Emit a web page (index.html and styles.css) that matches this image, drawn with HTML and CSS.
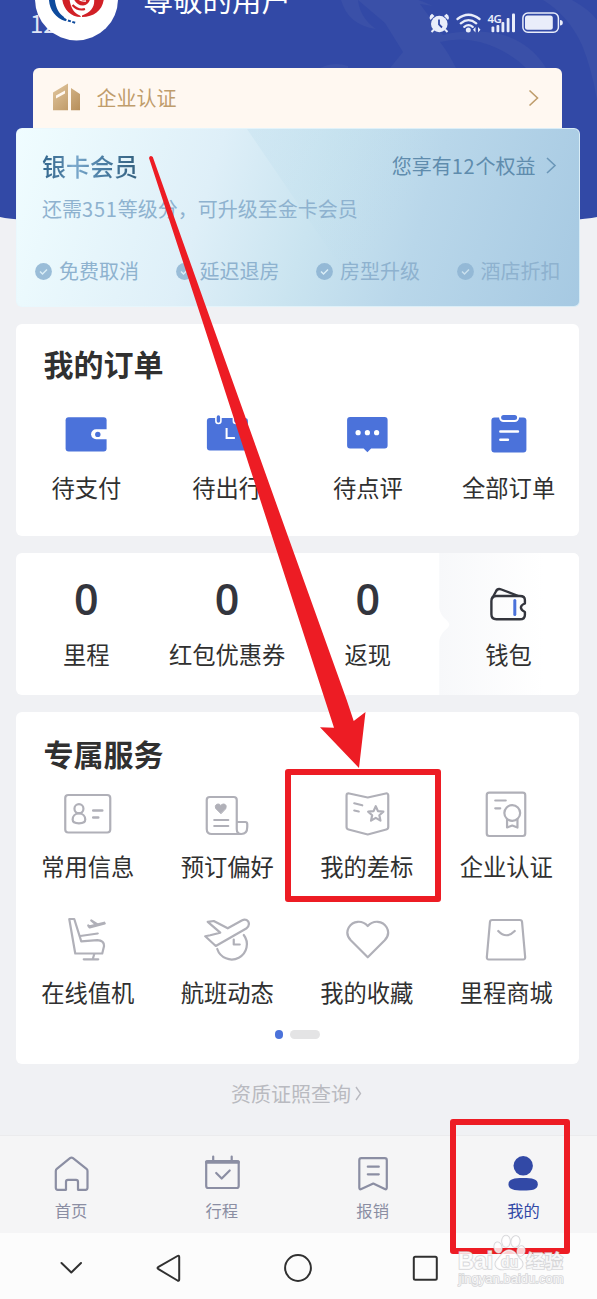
FILE: index.html
```html
<!DOCTYPE html>
<html lang="zh-CN">
<head>
<meta charset="utf-8">
<title>我的</title>
<link rel="stylesheet" href="styles.css">
</head>
<body>
<div class="screen">
  <svg class="hero" viewBox="0 0 597 226" width="597" height="226">
    <path fill="#3249a6" d="M0 0H597V217Q560 225 298 225T0 217Z"/>
    <g fill="#3a50a8">
      <path d="M341 0Q348 25 376 29Q360 18 358 0Z"/>
      <path d="M358 0L385 23L403 52L390 68H456Q448 52 440 42Q460 37 480 42Q508 50 526 68H546Q530 42 500 34Q470 28 443 35L420 4L433 6Q420 0 418 0Z"/>
      <path d="M543 0H572Q590 10 597 20V100Q592 70 582 45Q568 15 543 0Z"/>
      <path d="M320 68Q334 61 348 66V68Z"/>
    </g>
  </svg>

  <header class="top">
    <div class="clock">12</div>
    <svg class="avatar" viewBox="35 -43 84 84" width="84" height="84">
      <circle cx="76.5" cy="-1" r="41.5" fill="#fff"/>
      <path d="M49 -4C48 8 55 18 65 21L64 17C58 13 55 6 54.500 -4Z" fill="#0d4a9d"/>
      <path d="M64 18.500L67.500 21.500M68 20.500L76 23" stroke="#0d4a9d" stroke-width="2" stroke-dasharray="3 1.5"/>
      <path d="M62 -4C62 7 69 17 81 17L80 15.500C73 13 70 6 69 -4Z" fill="#d12026"/>
      <path d="M82 17C95 17 104 9 104 -4H93.500C96 5 92 12 82 15.500Z" fill="#d12026"/>
      <path d="M73 -4C74 2 78 5.500 83 5.500C88 5 90.500 1 90.500 -4Z" fill="#d12026"/>
      <path d="M72.500 5Q78 11 85 9" fill="none" stroke="#d12026" stroke-width="2.200"/>
      <path d="M77 -3Q80 2 86 1" fill="none" stroke="#fff" stroke-width="1.300"/>
    </svg>
    <div class="user-name">尊敬的用户</div>
    <svg class="status" viewBox="426 10 140 26" width="140" height="26">
      <g fill="#e9edfa">
        <circle cx="439.3" cy="24" r="8.3"/>
        <path d="M432 13.8L434.5 16L430.5 20L429.5 18Q429.5 15 432 13.8ZM446.5 13.8L444 16L448 20L449 18Q449 15 446.5 13.8Z"/>
        <path d="M434 29.500L431.500 32M445 29.500L447.500 32" stroke="#e9edfa" stroke-width="2"/>
        <circle cx="468.3" cy="30" r="2.5"/>
        <path d="M473 29.8L475.5 27V32.5ZM480.5 29.8L478 27V32.5Z"/>
        <rect x="491.5" y="26.5" width="2.8" height="5.7" rx="1"/><rect x="496.5" y="25" width="2.8" height="7.2" rx="1"/><rect x="501.5" y="22" width="2.8" height="10.2" rx="1"/><rect x="506.7" y="18" width="2.8" height="14.2" rx="1"/><rect x="512" y="13.5" width="3" height="18.7" rx="1"/>
        <rect x="525" y="15.5" width="27.8" height="14.2" rx="2.5"/>
        <path d="M560 20Q562.8 20 562.8 22.7T560 25.5Z"/>
      </g>
      <path d="M439 19.5V24.5L442 27.5" fill="none" stroke="#3249a6" stroke-width="1.8"/>
      <path d="M457.500 19Q468.500 10.500 479.500 19M460.800 23.300Q468.500 17 476.200 23.300M464.300 26.800Q468.500 23.500 472.700 26.800" fill="none" stroke="#e9edfa" stroke-width="2.300" stroke-linecap="round"/>
      <rect x="522.900" y="13" width="35.500" height="19.300" rx="5" fill="none" stroke="#e9edfa" stroke-width="1.500"/>
      <text class="net" x="487.500" y="22.800">4G</text>
    </svg>
  </header>

  <div class="cert">
    <svg viewBox="50 82 34 34" width="34" height="34">
      <defs><linearGradient id="gold" x1="0" y1="0" x2="1" y2="1"><stop offset="0" stop-color="#e2c79f"/><stop offset="1" stop-color="#b78f5a"/></linearGradient></defs>
      <path fill="url(#gold)" d="M53 93.500L68 84.500V111.300H53ZM71 89L80 95V111.300H71Z"/>
      <path fill="#fff8f1" d="M56 96.500L65 91.500V94.500L56 99.500Z"/>
    </svg>
    <span class="cert-label">企业认证</span>
    <svg viewBox="526 88 14 20" width="14" height="20"><path d="M529.500 90.500L537.500 98L529.500 105.500" fill="none" stroke="#bf9d6c" stroke-width="1.600"/></svg>
  </div>

  <section class="member">
    <div class="member-head">
      <span class="level">银卡会员</span>
      <span class="rights"><span>您享有<span class="num">12</span>个权益</span>
        <svg viewBox="544 156 14 20" width="14" height="20"><path d="M547 158L555 165.500L547 173" fill="none" stroke="#6b97b8" stroke-width="1.600"/></svg>
      </span>
    </div>
    <div class="upgrade">还需<span class="num">351</span>等级分，可升级至金卡会员</div>
    <div class="perks">
      <span class="perk"><svg viewBox="0 0 17 17" width="17" height="17"><circle cx="8.500" cy="8.500" r="8.400" fill="#9abdd8"/><path d="M5 8.500L7.500 11L12 6.500" fill="none" stroke="#d9edf6" stroke-width="1.500"/></svg>免费取消</span>
      <span class="perk"><svg viewBox="0 0 17 17" width="17" height="17"><circle cx="8.500" cy="8.500" r="8.400" fill="#9abdd8"/><path d="M5 8.500L7.500 11L12 6.500" fill="none" stroke="#d9edf6" stroke-width="1.500"/></svg>延迟退房</span>
      <span class="perk"><svg viewBox="0 0 17 17" width="17" height="17"><circle cx="8.500" cy="8.500" r="8.400" fill="#94b9d6"/><path d="M5 8.500L7.500 11L12 6.500" fill="none" stroke="#d9edf6" stroke-width="1.500"/></svg>房型升级</span>
      <span class="perk"><svg viewBox="0 0 17 17" width="17" height="17"><circle cx="8.500" cy="8.500" r="8.400" fill="#94b9d6"/><path d="M5 8.500L7.500 11L12 6.500" fill="none" stroke="#c9e0ee" stroke-width="1.500"/></svg>酒店折扣</span>
    </div>
  </section>

  <section class="card orders">
    <h2>我的订单</h2>
    <div class="grid">
      <div class="item">
        <svg viewBox="62.400 412 48 44" width="48" height="44"><rect x="66" y="417.300" width="41" height="34.300" rx="3" fill="#4b72da"/><path d="M107.500 429.300H96.500A5 5 0 0 0 96.500 439.300H107.500Z" fill="#fff"/><circle cx="98.200" cy="434.400" r="2.700" fill="#4b72da"/></svg>
        <span>待支付</span>
      </div>
      <div class="item">
        <svg viewBox="203.100 412 48 44" width="48" height="44"><rect x="207" y="418" width="41" height="32.500" rx="3" fill="#4b72da"/><g fill="#4b72da" stroke="#fff" stroke-width="1.600"><rect x="216" y="414.500" width="5" height="9" rx="2.500"/><rect x="233.500" y="414.500" width="5" height="9" rx="2.500"/></g><path d="M226.700 428V438H235" fill="none" stroke="#fff" stroke-width="2"/></svg>
        <span>待出行</span>
      </div>
      <div class="item">
        <svg viewBox="343.900 412 48 44" width="48" height="44"><path d="M350 417H384.500Q387.500 417 387.500 420V445.500Q387.500 448.500 384.500 448.500H371L367.300 452.200L363.500 448.500H350Q347 448.500 347 445.500V420Q347 417 350 417Z" fill="#4b72da"/><g fill="#fff"><circle cx="358" cy="432.700" r="2.600"/><circle cx="367.300" cy="432.700" r="2.600"/><circle cx="376.500" cy="432.700" r="2.600"/></g></svg>
        <span>待点评</span>
      </div>
      <div class="item">
        <svg viewBox="484.600 412 48 44" width="48" height="44"><rect x="491" y="417.600" width="35" height="35" rx="3" fill="#4b72da"/><rect x="499.700" y="414" width="18" height="7" rx="3.500" fill="#4b72da" stroke="#fff" stroke-width="2"/><path d="M500 431.500H517.500M500 439.700H507.500" stroke="#fff" stroke-width="2.600" stroke-linecap="round"/></svg>
        <span>全部订单</span>
      </div>
    </div>
  </section>

  <section class="card assets">
    <div class="asset"><b>0</b><span>里程</span></div>
    <div class="asset"><b>0</b><span>红包优惠券</span></div>
    <div class="asset"><b>0</b><span>返现</span></div>
    <div class="asset wallet">
      <svg viewBox="488.600 574 40 50" width="40" height="50"><g fill="none" stroke="#33353d" stroke-width="2.400" stroke-linejoin="round"><path d="M496 596H519.500Q524.500 596 524.500 600V603.500Q520.500 605 520.500 607.500T524.500 612V615Q524.500 619.300 519.500 619.300H496Q491 619.300 491 614.300V601Q491 596 496 596Z"/><path d="M492 598L495.500 591.500Q497 588 501 589.500L518 596"/></g><path d="M514.400 600.500V614.500" stroke="#4b72da" stroke-width="3" stroke-linecap="round"/></svg>
      <span>钱包</span>
    </div>
  </section>

  <section class="card services">
    <h2>专属服务</h2>
    <div class="grid">
      <div class="item">
        <svg class="line" viewBox="63.750 790 48 48" width="48" height="48"><rect x="65" y="795" width="45" height="37.500" rx="3"/><circle cx="78.700" cy="808.700" r="4.500"/><path d="M78.700 813.500C83 813.500 85 816.500 85 819.500C85 822.500 82 823.300 78.700 823.300S72.400 822.500 72.400 819.500C72.400 816.500 74.400 813.500 78.700 813.500Z"/><path d="M93 810.500H102M93 817.500H98" stroke-width="2.600"/></svg>
        <span>常用信息</span>
      </div>
      <div class="item">
        <svg class="line" viewBox="203.250 790 48 48" width="48" height="48"><path d="M241 834H212Q207 834 207 829V800Q207 797 210 797H234Q237 797 237 800V829Q237 834 241.500 834Q247.500 834 247.500 827V824Q247.500 822 245.500 822H237"/><path d="M214.500 820H228.500M214.500 826H228.500"/><path d="M221 813.500L216 808.500Q214.500 804.500 218.300 804Q220.300 804 221 805.500Q222 804 224 804Q227.500 804.500 226 808.500Z" fill="#b0b0b8" stroke-width="1"/></svg>
        <span>预订偏好</span>
      </div>
      <div class="item">
        <svg class="line" viewBox="342.750 790 48 48" width="48" height="48"><path d="M349 793.500L367.500 797.500L385.500 793.500Q388 793 388 795.500V827Q388 829 386 829.500L367.500 834.500L348.300 829.500Q346.300 829 346.300 827V795.500Q346.300 793 349 793.500Z"/><path d="M354 803.300L362 805.300M354 810.500L358.500 811.500"/><path d="M375.500 806.200L377.700 811.100L383.100 811.700L379.100 815.300L380.200 820.600L375.500 817.900L370.800 820.600L371.900 815.300L367.900 811.700L373.300 811.100Z"/></svg>
        <span>我的差标</span>
      </div>
      <div class="item">
        <svg class="line" viewBox="482.250 790 48 48" width="48" height="48"><rect x="487" y="792.700" width="38.500" height="43.300" rx="2.500"/><path d="M495.500 800.500H506M495.500 808.300H500.500"/><circle cx="512.500" cy="813" r="7.900"/><path d="M507.300 819.500V827.500L512.500 825.500L517.700 827.500V819.500"/></svg>
        <span>企业认证</span>
      </div>
      <div class="item">
        <svg class="line" viewBox="63.750 916 48 48" width="48" height="48"><path d="M69 919H74L81 941.300L97 940.200Q104 940.500 103.800 946L102 953.500H75Z"/><path d="M80 936L97.500 933.500M94 954L92.500 959.300M83.500 959.300H98"/><path d="M88 925.500L89.500 927.500L104.500 923.500M95 924L91 920.500L96.500 924M88.500 926.500L104 922.700"/></svg>
        <span>在线值机</span>
      </div>
      <div class="item">
        <svg class="line" viewBox="203.250 916 48 48" width="48" height="48"><path d="M208 921.800L214 921L228 928.300L242 920.500Q246 918.500 248.500 921.500Q250.500 925.500 246.500 928.500L216 946L205.500 936.300L210.500 935.200L220.500 932.700Z"/><path d="M244 935A15.200 15.200 0 1 1 217.500 949"/><path d="M234 939.500V944.500H240"/></svg>
        <span>航班动态</span>
      </div>
      <div class="item">
        <svg class="line" viewBox="342.750 916 48 48" width="48" height="48"><path d="M367.500 957.300L350.500 940.300C347 936.500 346.300 931.500 348.500 927.500C352.500 920.500 362 919.800 367.500 926C373 919.800 382.500 920.500 386.500 927.500C388.700 931.500 388 936.500 384.500 940.300Z"/></svg>
        <span>我的收藏</span>
      </div>
      <div class="item">
        <svg class="line" viewBox="482.250 916 48 48" width="48" height="48"><path d="M492.500 920H520Q522.200 920 522.300 922L525.400 957Q525.500 959.500 523.500 959.500H489Q487 959.500 487.100 957L490.200 922Q490.300 920 492.500 920Z"/><path d="M498.500 931Q506.500 939.500 515 931"/></svg>
        <span>里程商城</span>
      </div>
    </div>
    <div class="dots"><i class="dot"></i><i class="pill"></i></div>
  </section>

  <div class="license">资质证照查询
    <svg viewBox="355 1086 9 17" width="9" height="17"><path d="M357 1087L361.500 1093.500L357 1100" fill="none" stroke="#b9bac0" stroke-width="1.400"/></svg>
  </div>

  <nav class="tabs">
    <div class="tab">
      <svg viewBox="51 1154 40 40" width="40" height="40"><path d="M70 1158.200Q71.500 1157 73 1158.200L86.500 1168.800Q87.500 1169.600 87.500 1171V1187.800Q87.500 1189.800 85.500 1189.800H78V1181.800Q78 1179.800 76 1179.800H68Q66 1179.800 66 1181.800V1189.800H57.800Q55.800 1189.800 55.800 1187.800V1171Q55.800 1169.600 56.800 1168.800Z"/></svg>
      <span>首页</span>
    </div>
    <div class="tab">
      <svg viewBox="201.800 1154 40 40" width="40" height="40"><rect x="206" y="1161" width="32.500" height="27" rx="2"/><path d="M206.500 1162H238" stroke-width="3.500"/><path d="M213 1156.500V1161M231.500 1156.500V1161M216 1173L221.500 1178.500L229.500 1170.500"/></svg>
      <span>行程</span>
    </div>
    <div class="tab">
      <svg viewBox="352.700 1154 40 40" width="40" height="40"><path d="M361 1158.200H384.500Q386.500 1158.200 386.500 1160.200V1187.500Q386.500 1190 384.500 1189L373 1183.500L361 1189Q359 1190 359 1187.500V1160.200Q359 1158.200 361 1158.200Z"/><path d="M367.500 1166.700H378.500M367.500 1174.300H378.500"/></svg>
      <span>报销</span>
    </div>
    <div class="tab active">
      <svg viewBox="503.500 1154 40 40" width="40" height="40"><circle cx="523.700" cy="1165.800" r="9.700"/><path d="M523.700 1178C533 1178 538.300 1179 538.300 1184.300S533 1190.600 523.700 1190.600S509 1189.500 509 1184.300S514.500 1178 523.700 1178Z"/></svg>
      <span>我的</span>
    </div>
  </nav>

  <div class="sysnav">
    <svg viewBox="56 1253 30 30" width="30" height="30"><path d="M61.500 1263L71.300 1272.500L81 1263"/></svg>
    <svg viewBox="154 1253 30 30" width="30" height="30"><path d="M177.500 1256L158.500 1266.800Q156.500 1268 158.500 1269.200L177.500 1280.500Q179.200 1281.300 179.200 1279.500V1257Q179.200 1255 177.500 1256Z"/></svg>
    <svg viewBox="282.500 1253 30 30" width="30" height="30"><circle cx="297.500" cy="1268" r="12.900"/></svg>
    <svg viewBox="410 1253 30 30" width="30" height="30"><rect x="413.800" y="1256.700" width="23" height="23" rx="1.500"/></svg>
  </div>

  <svg class="arrow" viewBox="0 0 597 1299" width="597" height="1299">
    <path fill="#ed1c24" d="M149 158Q150 154.500 152.800 157L210.700 320L285.700 530L346.700 700L353.700 721L365.500 712L359 768L320 727.300L334 727.700L325 700L270 530L202 320Z"/>
  </svg>
  <div class="mark mark-standard"></div>
  <div class="mark mark-mine"></div>

  <svg class="watermark" viewBox="450 1230 125 62" width="125" height="62">
    <g fill="#fff" fill-opacity=".8" stroke="#cfcfd2" stroke-opacity=".85" stroke-width="1.600" paint-order="stroke">
      <ellipse cx="498" cy="1247.500" rx="3.700" ry="5.300" transform="rotate(-12 498 1247.500)"/>
      <ellipse cx="506" cy="1241.300" rx="4" ry="5.700"/>
      <ellipse cx="515.500" cy="1241.500" rx="4.200" ry="5.500" transform="rotate(10 515.500 1241.500)"/>
      <ellipse cx="521" cy="1251" rx="3.700" ry="5" transform="rotate(12 521 1251)"/>
      <path d="M509 1250C516 1250 517 1257 521 1260C525 1265 521 1270 516 1269.500C511 1268.500 507 1268.500 503 1269.500C497 1270 493 1265 497 1260C501 1256 503 1250 509 1250Z"/>
      <text class="wm-bai" x="458" y="1268.500" textLength="35" lengthAdjust="spacingAndGlyphs">Bai</text>
      <text class="wm-du" x="501" y="1266.500">du</text>
      <text class="wm-cn" x="526" y="1267.500">经验</text>
      <text class="wm-url" x="458.500" y="1282.500" textLength="105" lengthAdjust="spacingAndGlyphs">jingyan.baidu.com</text>
    </g>
  </svg>
</div>
</body>
</html>
```
FILE: styles.css
```css
* { box-sizing: border-box; }
body {
  margin: 0;
  background: #f0f1f4;
  font-family: "Noto Sans CJK SC", sans-serif;
  color: #303030;
}
svg { display: block; flex: none; }
.screen {
  position: relative;
  width: 597px;
  height: 1299px;
  overflow: hidden;
  display: flex;
  flex-direction: column;
}
.hero { position: absolute; left: 0; top: 0; z-index: -1; }

/* header */
.top {
  position: relative;
  height: 68px;
  display: flex;
  align-items: flex-start;
}
.clock {
  width: 5px;
  margin: 8px 0 0 30px;
  font: 400 24px/30px "Noto Sans CJK SC", sans-serif;
  color: #dfe4f5;
}
.avatar { position: relative; margin-top: -43px; }
.user-name {
  margin: -22px 0 0 24.5px;
  font-size: 29.5px;
  line-height: 40px;
  font-weight: 400;
  color: #fff;
  flex: 1;
  white-space: nowrap;
}
.status { margin: 10px 31px 0 0; }
.net { font: 600 11.500px "Noto Sans", sans-serif; fill: #e9edfa; letter-spacing: -.6px; }

/* company certification */
.cert {
  margin: 0 35px 0 33px;
  height: 60px;
  padding: 0 22px 0 17px;
  display: flex;
  align-items: center;
  background: #fff8f1;
  border-radius: 6px 6px 0 0;
  color: #bf9d6c;
  font-size: 20px;
  line-height: 30px;
}
.cert-label { flex: 1; margin: -1px 0 0 12.500px; }

/* membership */
.member {
  position: relative;
  margin: 0 17.5px 0 16px;
  height: 178.500px;
  padding: 20px 18px 0;
  border: 1px solid rgba(232, 247, 252, .75);
  border-radius: 6px;
  background: linear-gradient(107deg, #f0fdff 0%, #deeff8 34%, #cae4f0 52%, #b9d7ea 70%, #a6c9e2 100%) border-box;
}
.member::before {
  content: "";
  position: absolute;
  inset: 0;
  background: linear-gradient(130deg, rgba(180, 216, 234, .5), rgba(180, 214, 234, 0) 65%);
  clip-path: polygon(230px 0, 100% 0, 100% 100%, 350px 100%);
}
.member > * { position: relative; }
.member-head {
  display: flex;
  justify-content: space-between;
  align-items: center;
  height: 33px;
  padding: 0 3px 0 7px;
}
.level {
  font-size: 24px;
  line-height: 32px;
  font-weight: 500;
  color: transparent;
  background: linear-gradient(90deg, #34688f 0%, #4a7ba0 20%, #80add0 32%, #4d80a6 60%, #35617f 100%);
  background-clip: text;
  -webkit-background-clip: text;
}
.rights {
  display: flex;
  align-items: center;
  gap: 8px;
  font-size: 20px;
  line-height: 28px;
  color: #5f8cad;
}
.num { letter-spacing: .8px; }
.upgrade { margin: 13px 0 0 7px; font-size: 20px; line-height: 28px; color: #8eb2cf; }
.perks { display: flex; justify-content: space-between; margin-top: 34px; }
.perk {
  display: flex;
  align-items: center;
  gap: 7px;
  font-size: 20px;
  line-height: 28px;
  color: #8eb2cf;
}

/* white cards */
.card {
  margin: 17.500px 18px 0 16px;
  background: #fff;
  border-radius: 6px;
}
.card h2 { margin: 0 0 0 27.500px; font-size: 30px; line-height: 40px; font-weight: 700; }
.grid { display: grid; grid-template-columns: repeat(4, 1fr); }
.item, .asset {
  display: flex;
  flex-direction: column;
  align-items: center;
  font-size: 23.300px;
  line-height: 30px;
  white-space: nowrap;
}
.orders { height: 212px; padding-top: 19px; }
.orders .grid { margin-top: 29px; }
.orders .item { gap: 16px; }

.assets {
  height: 142px;
  margin-top: 17px;
  display: grid;
  grid-template-columns: repeat(4, 1fr);
  overflow: hidden;
}
.asset { padding-top: 21px; gap: 15px; }
.asset b { font: 600 43px/50px "Open Sans", "Noto Sans", sans-serif; color: #33353d; }
.wallet { position: relative; }
.wallet::before {
  content: "";
  position: absolute;
  inset: 0;
  background: linear-gradient(90deg, #f7f8fa, #fff 75%);
  clip-path: path("M1 0H150V142H1V88Q2 82 6 78Q11 74 11 71.500T6 65Q2 61 1 55Z");
}
.wallet > * { position: relative; }

.services { height: 352px; margin-top: 17px; padding-top: 21px; }
.services .grid { padding: 0 3px 0 2px; margin-top: 17px; row-gap: 35px; }
.services .item { gap: 13px; }
.line { fill: none; stroke: #b0b0b8; stroke-width: 2.200; stroke-linecap: round; stroke-linejoin: round; }
.dots { display: flex; justify-content: center; gap: 7px; margin-top: 23px; }
.dot { width: 8.500px; height: 8.500px; border-radius: 50%; background: #4b72da; }
.pill { width: 30px; height: 8.500px; border-radius: 5px; background: #e4e4e5; }

.license {
  margin-top: 15px;
  padding-right: 3px;
  display: flex;
  justify-content: center;
  align-items: center;
  gap: 3px;
  font-size: 20px;
  line-height: 30px;
  color: #b9bac0;
}

/* bottom bars */
.tabs {
  margin-top: auto;
  height: 98px;
  padding: 18px 23.500px 0 21px;
  display: flex;
  justify-content: space-between;
  background: #f5f5f6;
  border-top: 1px solid #ebebed;
}
.tab {
  width: 100px;
  display: flex;
  flex-direction: column;
  align-items: center;
  gap: 5px;
  font-size: 16.300px;
  line-height: 22px;
  color: #8b8ea3;
}
.tab svg { fill: none; stroke: #8b8ea3; stroke-width: 2.200; stroke-linecap: round; stroke-linejoin: round; }
.tab.active { color: #3249a6; }
.tab.active svg { fill: #3249a6; stroke: none; }
.sysnav {
  height: 66px;
  padding: 4px 0 0 22px;
  display: grid;
  grid-template-columns: 98px 98px 159px 96px;
  align-items: center;
  justify-items: center;
  background: #fcfcfc;
}
.sysnav svg { fill: none; stroke: #303030; stroke-width: 2; stroke-linecap: round; stroke-linejoin: round; }

/* annotations over the screen */
.arrow { position: absolute; left: 0; top: 0; }
.mark { position: absolute; border: 6px solid #ed1c24; border-radius: 3px; }
.mark-standard { left: 285px; top: 769px; width: 156px; height: 133px; }
.mark-mine { left: 450px; top: 1119px; width: 120px; height: 135px; }
.watermark { position: absolute; left: 450px; top: 1230px; }
.watermark text { font-family: "Liberation Sans", sans-serif; }
.watermark .wm-bai { font-weight: 700; font-size: 23px; }
.watermark .wm-du { font-weight: 700; font-size: 14px; }
.watermark .wm-cn { font-family: "Noto Sans CJK SC", sans-serif; font-weight: 700; font-size: 18.500px; }
.watermark .wm-url { font-size: 13px; }
```
